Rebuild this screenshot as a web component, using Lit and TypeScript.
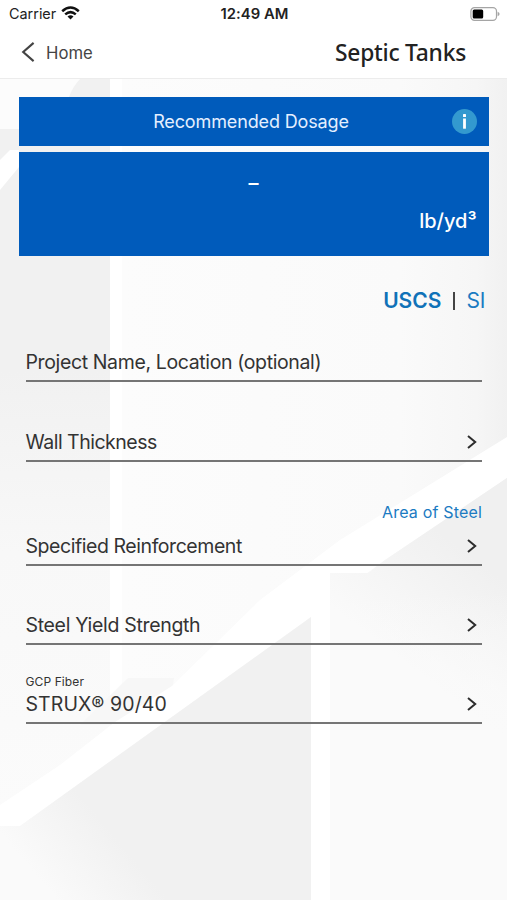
import { LitElement, html, css } from "lit";
import { customElement, property } from "lit/decorators.js";

@customElement("concrete-backdrop")
class ConcreteBackdrop extends LitElement {
  static styles = css`
    :host { position: absolute; inset: 0; display: block; }
    svg { display: block; width: 100%; height: 100%; }
  `;
  render() {
    return html`<svg viewBox="0 0 507 900" preserveAspectRatio="none" aria-hidden="true">
      <defs>
        <linearGradient id="column" x1="0" y1="0" x2="0" y2="1">
          <stop offset="0" stop-color="#f1f1f1" />
          <stop offset="0.4" stop-color="#f1f1f1" />
          <stop offset="0.65" stop-color="#f8f8f8" />
          <stop offset="1" stop-color="#fbfbfb" />
        </linearGradient>
        <linearGradient id="edge" x1="0" y1="0" x2="1" y2="0">
          <stop offset="0" stop-color="#fcfcfc" />
          <stop offset="0.72" stop-color="#fafafa" />
          <stop offset="0.92" stop-color="#f6f6f6" />
          <stop offset="1" stop-color="#f1f1f1" />
        </linearGradient>
        <linearGradient id="shade" gradientUnits="userSpaceOnUse" x1="40" y1="880" x2="105" y2="825">
          <stop offset="0" stop-color="#fafafa" />
          <stop offset="1" stop-color="#f1f1f1" />
        </linearGradient>
        <linearGradient id="wall" gradientUnits="userSpaceOnUse" x1="375" y1="640" x2="450" y2="540">
          <stop offset="0" stop-color="#fafafa" />
          <stop offset="1" stop-color="#f0f0f0" />
        </linearGradient>
        <linearGradient id="fall" gradientUnits="userSpaceOnUse" x1="0" y1="590" x2="0" y2="740">
          <stop offset="0" stop-color="#fafafa" stop-opacity="0" />
          <stop offset="1" stop-color="#fafafa" />
        </linearGradient>
      </defs>
      <rect width="507" height="900" fill="#fcfcfc" />
      <rect y="78" width="110" height="730" fill="url(#column)" />
      <path d="M0 78H81Q73 86 69 97V129H0Z" fill="#fcfcfc" />
      <path d="M0 160L10 150H19V167L0 190Z" fill="#fff" />
      <rect x="110" y="78" width="12" height="640" fill="#fff" />
      <rect x="122" y="78" width="385" height="640" fill="url(#edge)" />
      <path d="M128 678H174L172 692L115 725H80Z" fill="#f7f7f7" />
      <path d="M0 805L60 765L115 722L172 686L260 600L340 540L507 437V478L385 560L330 600V900H311V617L20 826H0Z" fill="#fff" />
      <path d="M20 826L311 617V900H0V826Z" fill="url(#shade)" />
      <path d="M330 573H368L385 560L507 478V900H330Z" fill="url(#wall)" />
      <path d="M330 590H507V900H330Z" fill="url(#fall)" />
    </svg>`;
  }
}

@customElement("chevron-icon")
class ChevronIcon extends LitElement {
  static styles = css`:host, svg { display: block; }`;
  render() {
    return html`<svg width="10" height="16" viewBox="0 0 10 16" fill="none" stroke="#2d2d2d" stroke-width="2"><path d="M1 2L8.2 8L1 14" /></svg>`;
  }
}

@customElement("form-row")
class FormRow extends LitElement {
  @property() label = "";
  @property() caption = "";
  @property() hint = "";
  @property({ type: Boolean }) plain = false;
  static styles = css`
    :host { box-sizing: border-box; display: flex; flex-direction: column; justify-content: flex-end; border-bottom: 2px solid #757575; color: #333; }
    .hint { align-self: flex-end; font-size: 16px; line-height: 20px; margin-bottom: 11px; color: #1b7bc2; letter-spacing: .18px; }
    .caption { font-size: 12px; line-height: 14px; margin-bottom: 2px; letter-spacing: .1px; }
    .line { display: flex; align-items: center; justify-content: space-between; height: 26px; padding: 0 5px 5px 0; }
    .label { font-size: 19.5px; line-height: 26px; white-space: nowrap; letter-spacing: var(--tracking, -.4px); }
  `;
  render() {
    return html`
      ${this.hint ? html`<div class="hint">${this.hint}</div>` : ""}
      ${this.caption ? html`<div class="caption">${this.caption}</div>` : ""}
      <div class="line"><span class="label">${this.label}</span>${this.plain ? "" : html`<chevron-icon></chevron-icon>`}</div>`;
  }
}

@customElement("app-root")
class AppRoot extends LitElement {
  static styles = css`
    :host { display: block; position: relative; width: 507px; height: 900px; overflow: hidden; font-family: Inter, "Liberation Sans", sans-serif; color: #333; }
    .page { position: relative; display: flex; flex-direction: column; height: 100%; }
    .top { background: #fff; height: 78px; border-bottom: 1px solid #ececec; box-sizing: content-box; }
    .status { display: grid; grid-template-columns: 1fr auto 1fr; align-items: center; height: 27px; padding: 0 7px 0 9px; color: #222; }
    .carrier { display: flex; align-items: center; gap: 5px; font-size: 14.4px; }
    .carrier svg { margin-top: -2px; }
    .time { font-size: 14.8px; font-weight: 600; letter-spacing: .05px; }
    .battery { justify-self: end; }
    svg { display: block; }
    .nav { display: flex; align-items: center; justify-content: space-between; height: 51px; padding: 0 41px 0 21px; }
    .back { display: flex; align-items: center; gap: 11px; font-size: 16.7px; color: #444; }
    .back svg { margin-top: -1px; }
    .title { font-family: "Noto Sans", sans-serif; font-weight: 500; font-size: 22.8px; letter-spacing: -.25px; color: #222; }
    .main { padding: 18px 18px 0 19px; }
    .head { display: grid; grid-template-columns: 1fr auto 1fr; align-items: center; height: 49px; background: #005bbb; color: #e4efff; padding: 0 12.5px; }
    .head-title { grid-column: 2; font-size: 18px; letter-spacing: -.13px; margin-right: 6px; }
    .info { justify-self: end; display: grid; place-items: center; width: 25px; height: 25px; border-radius: 50%; background: #3399cf; color: #fff; }
    .result { display: flex; flex-direction: column; align-items: center; height: 104px; margin-top: 6px; background: #005bbb; color: #fff; font-weight: 500; font-size: 20px; }
    .value { height: 56px; line-height: 62px; margin-right: 1px; }
    .unit { align-self: flex-end; padding-right: 12.5px; line-height: 26px; }
    .units { display: flex; justify-content: flex-end; align-items: center; height: 28px; margin: 30px 3.5px 0 0; font-size: 21px; color: #1b7bc2; }
    .on { font-weight: 600; color: #1072b8; }
    .bar { width: 2px; height: 18px; background: #444; margin: 2px 11px 0 12px; }
    .form { padding: 0 7px 0 6.5px; }
    .r0 { height: 68px; --tracking: -.37px; }
    .r1 { height: 80px; --tracking: -.5px; }
    .r2 { height: 104px; --tracking: -.44px; }
    .r3 { height: 79px; --tracking: -.32px; }
    .r4 { height: 79.4px; --tracking: .1px; }
  `;
  render() {
    return html`
      <concrete-backdrop></concrete-backdrop>
      <div class="page">
        <div class="top">
          <div class="status">
            <div class="carrier">Carrier
              <svg width="19" height="14" viewBox="0 0 19 14" fill="none" stroke="#111" stroke-width="2.5"><path d="M1.2 5.2Q9.5 -2.2 17.8 5.2" /><path d="M4.2 8.4Q9.5 3.8 14.8 8.4" /><path d="M9.5 13.5L6.5 10.5Q9.5 8 12.5 10.5Z" fill="#111" stroke="none" /></svg>
            </div>
            <div class="time">12:49 AM</div>
            <svg class="battery" width="30" height="14" viewBox="0 0 30 14"><rect x=".9" y=".7" width="25.6" height="12.6" rx="3.6" fill="#fff" stroke="#a5a5a5" stroke-width="1.2" /><rect x="2.7" y="2.5" width="10.5" height="9" rx="1.5" fill="#000" /><path d="M27.6 4.8Q29.6 5.5 29.6 7T27.6 9.2Z" fill="#a5a5a5" /></svg>
          </div>
          <div class="nav">
            <div class="back"><svg width="14" height="20" viewBox="0 0 14 20" fill="none" stroke="#444" stroke-width="2.1"><path d="M12.6 .9L2.2 10L12.6 19.1" /></svg>Home</div>
            <div class="title">Septic Tanks</div>
          </div>
        </div>
        <div class="main">
          <div class="head"><span class="head-title">Recommended Dosage</span>
            <span class="info"><svg width="5" height="15" viewBox="0 0 5 15" fill="#fff"><rect x="1" y="0" width="3" height="3" rx=".6" /><rect x="1.1" y="4.5" width="2.8" height="10.2" /></svg></span></div>
          <div class="result"><div class="value">–</div><div class="unit">lb/yd³</div></div>
          <div class="units"><span class="on">USCS</span><span class="bar"></span><span>SI</span></div>
          <div class="form">
            <form-row class="r0" plain label="Project Name, Location (optional)"></form-row>
            <form-row class="r1" label="Wall Thickness"></form-row>
            <form-row class="r2" hint="Area of Steel" label="Specified Reinforcement"></form-row>
            <form-row class="r3" label="Steel Yield Strength"></form-row>
            <form-row class="r4" caption="GCP Fiber" label="STRUX® 90/40"></form-row>
          </div>
        </div>
      </div>`;
  }
}
